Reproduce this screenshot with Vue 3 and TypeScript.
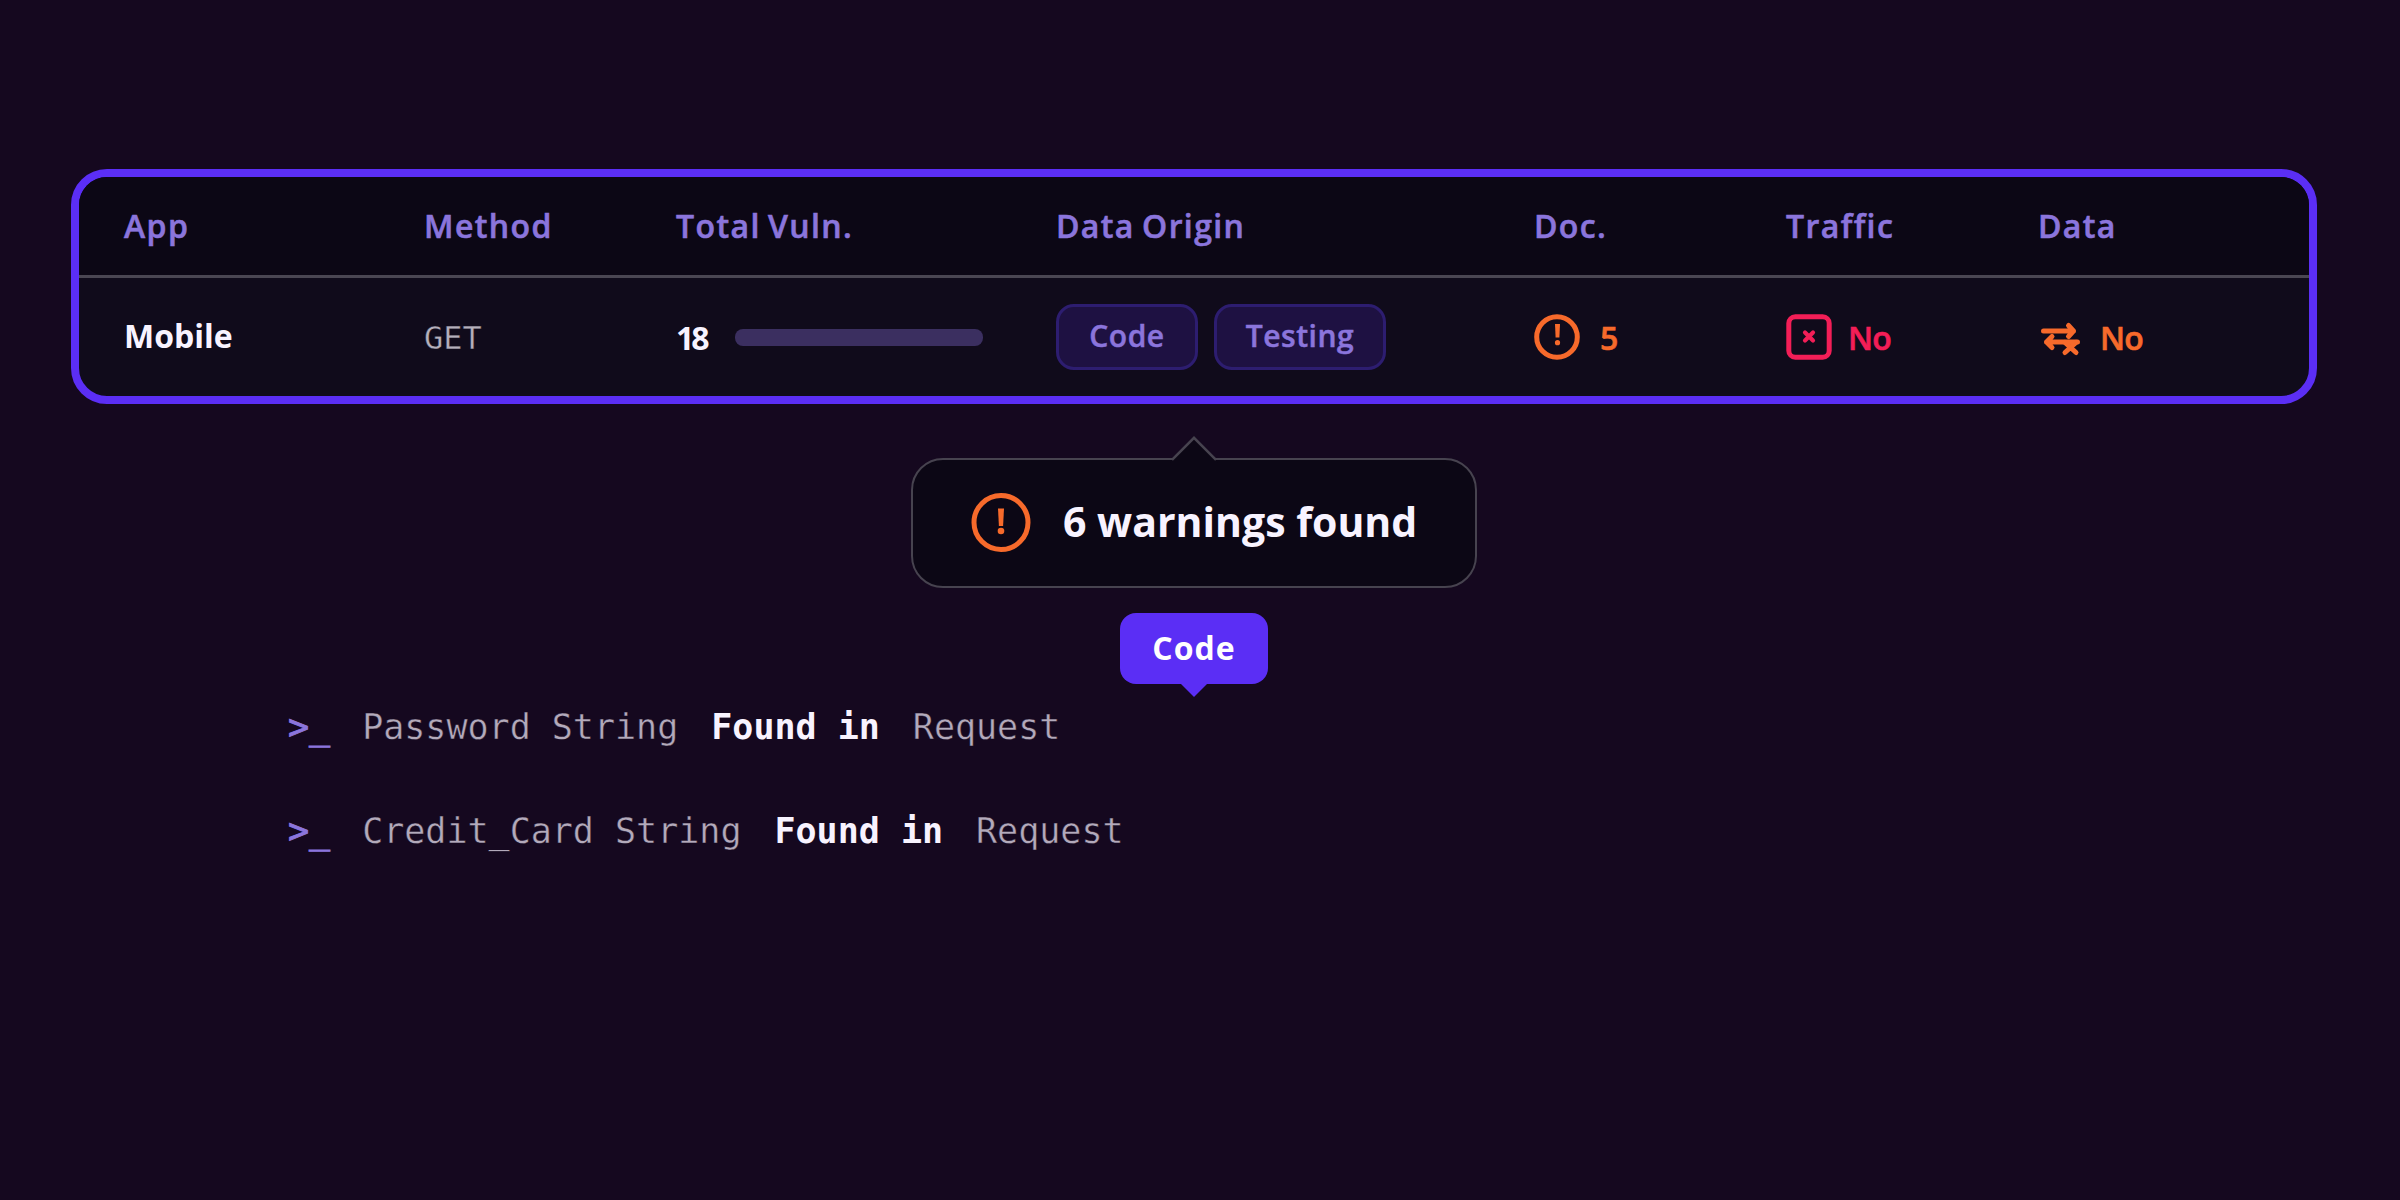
<script setup lang="ts">
interface Finding {
  subject: string;
  location: string;
}

interface Row {
  app: string;
  method: string;
  total: number;
  origins: string[];
  doc: number;
  traffic: string;
  data: string;
}

const columns = ['App', 'Method', 'Total Vuln.', 'Data Origin', 'Doc.', 'Traffic', 'Data'];

const row: Row = {
  app: 'Mobile',
  method: 'GET',
  total: 18,
  origins: ['Code', 'Testing'],
  doc: 5,
  traffic: 'No',
  data: 'No',
};

const findings: Finding[] = [
  { subject: 'Password String', location: 'Request' },
  { subject: 'Credit_Card String', location: 'Request' },
];
</script>

<template>
  <main class="page">
    <section class="table">
      <div class="grid head">
        <span v-for="column in columns" :key="column">{{ column }}</span>
      </div>
      <div class="grid body">
        <span class="app">{{ row.app }}</span>
        <span class="method">{{ row.method }}</span>
        <div class="total">
          <span class="number">{{ row.total }}</span>
          <div class="bar"></div>
        </div>
        <div class="origins">
          <span v-for="origin in row.origins" :key="origin" class="chip">{{ origin }}</span>
        </div>
        <div class="status orange doc">
          <svg width="46" height="46" viewBox="0 0 46 46" fill="none" stroke="currentColor">
            <circle cx="23" cy="23" r="20.3" stroke-width="5" />
            <path d="M21 10h5l-.6 13.500h-3.800z" fill="currentColor" stroke="none" />
            <circle cx="23.500" cy="28.700" r="2.600" fill="currentColor" stroke="none" />
          </svg>
          <span>{{ row.doc }}</span>
        </div>
        <div class="status red">
          <svg width="46" height="46" viewBox="0 0 46 46" fill="none" stroke="currentColor">
            <rect x="2.8" y="2.8" width="40.4" height="40.4" rx="6.5" stroke-width="5" />
            <path d="M19 18.600l8 8M27 18.600l-8 8" stroke-width="4.200" stroke-linecap="round" />
          </svg>
          <span>{{ row.traffic }}</span>
        </div>
        <div class="status orange">
          <svg width="46" height="46" viewBox="0 0 46 46" fill="none" stroke="currentColor" stroke-width="5" stroke-linecap="round" stroke-linejoin="round">
            <path d="M5.500 17h30M30.500 11.500l5 5.500-5 5.500" />
            <path d="M39.500 28h-31M14 22.500L8.500 28l5.500 5.500" />
            <path d="M27 28.500l11 10M38 28.500l-11 10" />
          </svg>
          <span>{{ row.data }}</span>
        </div>
      </div>
    </section>

    <section class="tooltip">
      <svg class="tip" width="48" height="27" viewBox="0 0 48 27">
        <path d="M0 27L2 24 24 2 46 24 48 27z" fill="#0c0715" />
        <path d="M2 23.800L24 1.800 46 23.800" fill="none" stroke="#47434f" stroke-width="2.500" />
      </svg>
      <svg width="60" height="60" viewBox="0 0 60 60" fill="none" stroke="#f76a2b">
        <circle cx="30" cy="29.500" r="27" stroke-width="5" />
        <path d="M27 15.500h6l-.9 17.500h-4.200z" fill="#f76a2b" stroke="none" />
        <circle cx="30" cy="38" r="3.300" fill="#f76a2b" stroke="none" />
      </svg>
      <span class="message">6 warnings found</span>
    </section>

    <div class="bubble">Code</div>

    <section class="log">
      <p v-for="finding in findings" :key="finding.subject">
        <span class="prompt">&gt;_</span>
        <span>{{ finding.subject }}</span>
        <strong>Found in</strong>
        <span>{{ finding.location }}</span>
      </p>
    </section>
  </main>
</template>

<style>
body {
  background: #15081f;
}
</style>

<style scoped>
* {
  box-sizing: border-box;
}

.page {
  display: flex;
  flex-direction: column;
  align-items: center;
  width: 2400px;
  height: 1200px;
  padding: 169px 12px 0 0;
  overflow: hidden;
  background: #15081f;
  font-family: 'Open Sans', sans-serif;
  font-weight: 600;
}

.table {
  width: 2246px;
  height: 235px;
  border: 8px solid #5b2ef5;
  border-radius: 36px;
  overflow: hidden;
  background: #100b1b;
}

.grid {
  display: grid;
  grid-template-columns: 300px 252px 380px 478px 252px 252px 1fr;
  align-items: center;
  padding-left: 45px;
}

.head {
  height: 101px;
  padding-bottom: 2px;
  border-bottom: 3px solid #4a4652;
  background: #0c0715;
  color: #8b75dc;
  font-size: 32px;
  letter-spacing: 1.4px;
  word-spacing: -2.5px;
  -webkit-text-stroke: 0.6px currentColor;
}

.body {
  height: 118px;
  color: #f8f3ff;
  font-size: 32px;
}

.app {
  padding-bottom: 4px;
  font-weight: 700;
}

.method {
  padding-top: 1px;
  color: #b5b0bc;
  font: 400 32px 'DejaVu Sans Mono', monospace;
  -webkit-text-stroke: 0.4px #100b1b;
}

.total {
  display: flex;
  align-items: center;
  gap: 28px;
}

.number {
  width: 31px;
  font-weight: 700;
  letter-spacing: -3px;
}

.bar {
  width: 248px;
  height: 17px;
  border-radius: 8px;
  background: #3b2f60;
}

.origins {
  display: flex;
  gap: 16px;
}

.chip {
  display: flex;
  align-items: center;
  justify-content: center;
  width: 142px;
  height: 66px;
  padding-bottom: 4px;
  border: 3px solid #2d1d70;
  border-radius: 18px;
  background: #1e1142;
  color: #8b75dc;
  font-size: 30px;
  letter-spacing: 0.5px;
  -webkit-text-stroke: 0.5px currentColor;
}

.chip + .chip {
  width: 172px;
}

.status {
  display: flex;
  align-items: center;
  gap: 16px;
  letter-spacing: -0.8px;
  -webkit-text-stroke: 0.6px currentColor;
}

.doc {
  gap: 20px;
}

.orange {
  color: #f76a2b;
}

.red {
  color: #f31e57;
}

.tooltip {
  position: relative;
  display: flex;
  align-items: center;
  gap: 32px;
  width: 566px;
  height: 130px;
  margin-top: 54px;
  padding-left: 58px;
  border: 2.5px solid #47434f;
  border-radius: 32px;
  background: #0c0715;
  color: #f8f3ff;
  font-size: 41px;
  font-weight: 700;
}

.message {
  padding-bottom: 4px;
}

.tip {
  position: absolute;
  top: -24px;
  left: 257px;
}

.bubble {
  position: relative;
  display: flex;
  align-items: center;
  justify-content: center;
  width: 148px;
  height: 71px;
  margin-top: 25px;
  padding-bottom: 2px;
  border-radius: 16px;
  background: #5b2ef5;
  color: #fff;
  font-size: 32px;
  font-weight: 700;
  letter-spacing: 1px;
}

.bubble::after {
  content: '';
  position: absolute;
  top: 70px;
  left: 60px;
  border: 14px solid transparent;
  border-top-color: #5b2ef5;
  border-bottom: 0;
}

.log {
  align-self: flex-start;
  padding: 21px 0 0 287px;
  color: #b3aabb;
  font: 400 35px/44px 'DejaVu Sans Mono', monospace;
}

.log p {
  display: flex;
  gap: 33px;
  margin: 0 0 60px;
}

.log span {
  -webkit-text-stroke: 0.4px #15081f;
}

.log strong {
  color: #f8f3ff;
}

.log .prompt {
  margin: 0 -1px 0 1px;
  color: #8b75dc;
  -webkit-text-stroke: 0.9px #8b75dc;
}
</style>
